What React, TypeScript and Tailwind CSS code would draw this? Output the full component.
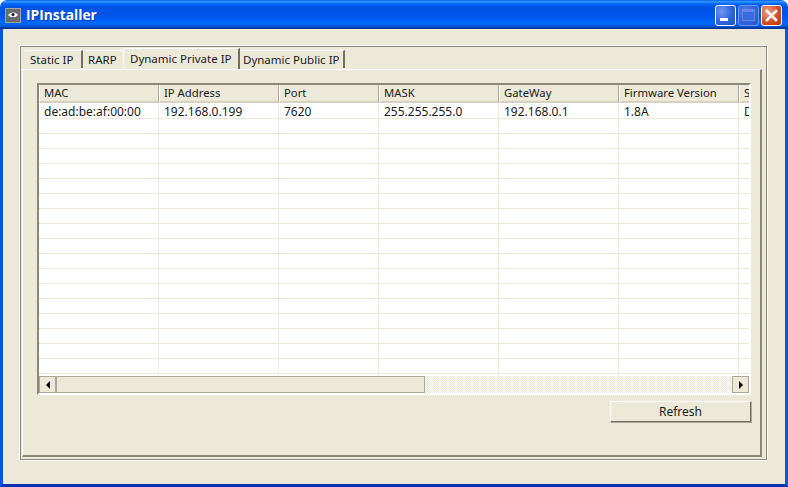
const columns = [
  { name: "MAC", value: "de:ad:be:af:00:00", valuePad: "pl-[5px]", width: "w-[120px]" },
  { name: "IP Address", value: "192.168.0.199", valuePad: "pl-[5px]", width: "w-[120px]" },
  { name: "Port", value: "7620", valuePad: "pl-[5px]", width: "w-[100px]" },
  { name: "MASK", value: "255.255.255.0", valuePad: "pl-[5px]", width: "w-[120px]" },
  { name: "GateWay", value: "192.168.0.1", valuePad: "pl-[5px]", width: "w-[120px]" },
  { name: "Firmware Version", value: "1.8A", valuePad: "pl-[5px]", width: "w-[120px]" },
  { name: "Status", value: "DHCP", valuePad: "pl-[5px]", width: "w-[120px]" },
];

const emptyRows = Array.from({ length: 17 }, (_, i) => i);

function WindowButton({ kind }: { kind: "min" | "max" | "close" }) {
  const bg =
    kind === "close"
      ? "bg-[radial-gradient(circle_at_30%_30%,#f0a080,#d8502a_55%,#b8300f)]"
      : kind === "min"
        ? "bg-[radial-gradient(circle_at_30%_30%,#6f9bf2,#2f62dc_55%,#2250c8)]"
        : "bg-[radial-gradient(circle_at_30%_30%,#4f7fe4,#2f62dc_55%,#2a5ad0)]";
  const border = kind === "max" ? "border-[#6f93e8]" : "border-white";
  return (
    <div className={`w-[21px] h-[21px] rounded-[3px] border flex items-center justify-center ${border} ${bg}`}>
      {kind === "min" && <div className="w-[8px] h-[3px] bg-white mt-[9px] -ml-[3px]" />}
      {kind === "max" && <div className="w-[13px] h-[12px] border border-[#5f86e6] border-t-[3px] bg-[#3a6ae0]" />}
      {kind === "close" && (
        <svg width="15" height="15" viewBox="0 0 15 15">
          <path d="M3 3 L12 12 M12 3 L3 12" stroke="#fff" strokeWidth="2.6" strokeLinecap="square" />
        </svg>
      )}
    </div>
  );
}

function Tab({ label, size, active, noSeparator }: { label: string; size: string; active?: boolean; noSeparator?: boolean }) {
  if (active) {
    return (
      <div className={`relative z-10 h-[21px] -mb-[1px] flex items-start pt-[4px] bg-[#ece9d8] border-l border-l-white border-t border-t-white border-r-2 border-r-[#716f64] ${size}`}>
        {label}
      </div>
    );
  }
  return (
    <div className={`h-[18px] flex items-center pt-[1px] border-t border-white border-r-2 ${noSeparator ? "border-r-transparent" : "border-r-[#716f64]"} ${size}`}>
      {label}
    </div>
  );
}

function ScrollButton({ dir }: { dir: "left" | "right" }) {
  return (
    <div className="w-[17px] h-[17px] shrink-0 bg-[#ece9d8] border border-[#aca899] flex items-center justify-center">
      <div
        className={
          dir === "left"
            ? "w-0 h-0 border-y-[4px] border-y-transparent border-r-[4px] border-r-black"
            : "w-0 h-0 border-y-[4px] border-y-transparent border-l-[4px] border-l-black"
        }
      />
    </div>
  );
}

export default function App() {
  return (
    <div className="w-[788px] h-[487px] flex flex-col overflow-hidden font-['Noto_Sans',sans-serif] text-[11.3px] text-[#1a1a1a] leading-none">
      {/* barra de titulo */}
      <div className="h-[29px] shrink-0 flex items-center pl-[5px] pr-[6px] rounded-t-[7px] bg-[linear-gradient(to_bottom,#0058ee_0%,#3593ff_5%,#127dff_10%,#0262ee_15%,#0054e3_25%,#0055eb_55%,#005bf5_66%,#026afe_76%,#0062ef_86%,#0052d6_92%,#0040ab_95%,#003092_100%)]">
        <div className="w-[16px] h-[15px] mt-[1px] bg-[#6a6c70] border border-[#a0a2a6] flex items-center justify-center">
          <svg width="12" height="10" viewBox="0 0 12 10">
            <path d="M1 5 C3 1.5 9 1.5 11 5 L8.5 7 H3.5 Z" fill="#fff" />
            <circle cx="6" cy="4.6" r="1.6" fill="#222" />
          </svg>
        </div>
        <span className="ml-[5px] font-['Open_Sans',sans-serif] font-bold text-[13.8px] text-white [text-shadow:1px_1px_0_#0f3fa8]">
          IPInstaller
        </span>
        <div className="ml-auto flex gap-[2px] mt-[1px]">
          <WindowButton kind="min" />
          <WindowButton kind="max" />
          <WindowButton kind="close" />
        </div>
      </div>

      {/* area do cliente */}
      <div className="flex-1 bg-[#ece9d8] border-x-3 border-b-3 border-x-[#0855dd] border-b-[#0831b0] pl-[17px] pt-[17px]">
        <div className="w-[747px] h-[414px] border border-[#8a8878] shadow-[-1px_-1px_0_#fff,1px_1px_0_#fff] pl-[1px] pt-[2px] flex flex-col">
          {/* abas */}
          <div className="h-[20px] shrink-0 flex items-end pl-[3px] pb-[1px] text-[11.5px]">
            <Tab label="Static IP" size="w-[58px] pl-[5px]" />
            <Tab label="RARP" size="w-[40px] pl-[5px]" noSeparator />
            <Tab label="Dynamic Private IP" size="w-[117px] pl-[6px]" active />
            <Tab label="Dynamic Public IP" size="w-[105px] pl-[3px]" />
          </div>

          <div className="w-[740px] h-[388px] border-t border-l border-white border-r-2 border-r-[#8a8878] border-b-2 border-b-[#8a8878] pl-[14px] pt-[13px]">
            {/* lista */}
            <div className="w-[714px] h-[312px] border-2 border-[#8a8878] border-r-white border-b-white bg-white flex flex-col overflow-hidden">
              <div className="flex h-[18px] shrink-0 overflow-hidden">
                {columns.map((c) => (
                  <div
                    key={c.name}
                    className={`${c.width} shrink-0 pl-[4px] flex items-center bg-[#ece9d8] border-l border-white border-r border-r-[#aca899] border-b-2 border-b-[#d6d2bf]`}
                  >
                    {c.name}
                  </div>
                ))}
              </div>
              <div className="flex-1 min-h-0 overflow-hidden">
                <div className="flex h-[16px] overflow-hidden border-b border-[#ece9d8] text-[12px]">
                  {columns.map((c) => (
                    <div key={c.name} className={`${c.width} shrink-0 ${c.valuePad} pt-[2px] flex items-center border-r border-[#ece9d8]`}>
                      {c.value}
                    </div>
                  ))}
                </div>
                {emptyRows.map((r) => (
                  <div key={r} className="flex h-[15px] overflow-hidden border-b border-[#ece9d8]">
                    {columns.map((c) => (
                      <div key={c.name} className={`${c.width} shrink-0 border-r border-[#ece9d8]`} />
                    ))}
                  </div>
                ))}
              </div>
              {/* barra de rolagem */}
              <div className="h-[17px] shrink-0 flex">
                <ScrollButton dir="left" />
                <div className="w-[369px] h-[17px] shrink-0 bg-[#ece9d8] border border-[#aca899]" />
                <div className="flex-1 bg-[repeating-conic-gradient(#ece9d8_0_25%,#fff_0_50%)] bg-[length:2px_2px]" />
                <ScrollButton dir="right" />
              </div>
            </div>

            <div className="w-[714px] flex justify-end mt-[6px]">
              <div className="w-[141px] h-[21px] flex items-center justify-center bg-[#ece9d8] border border-t-white border-l-white border-r-[#716f64] border-b-[#716f64] shadow-[1px_1px_0_#aca899] text-[12px]">
                Refresh
              </div>
            </div>
          </div>
        </div>
      </div>
    </div>
  );
}
